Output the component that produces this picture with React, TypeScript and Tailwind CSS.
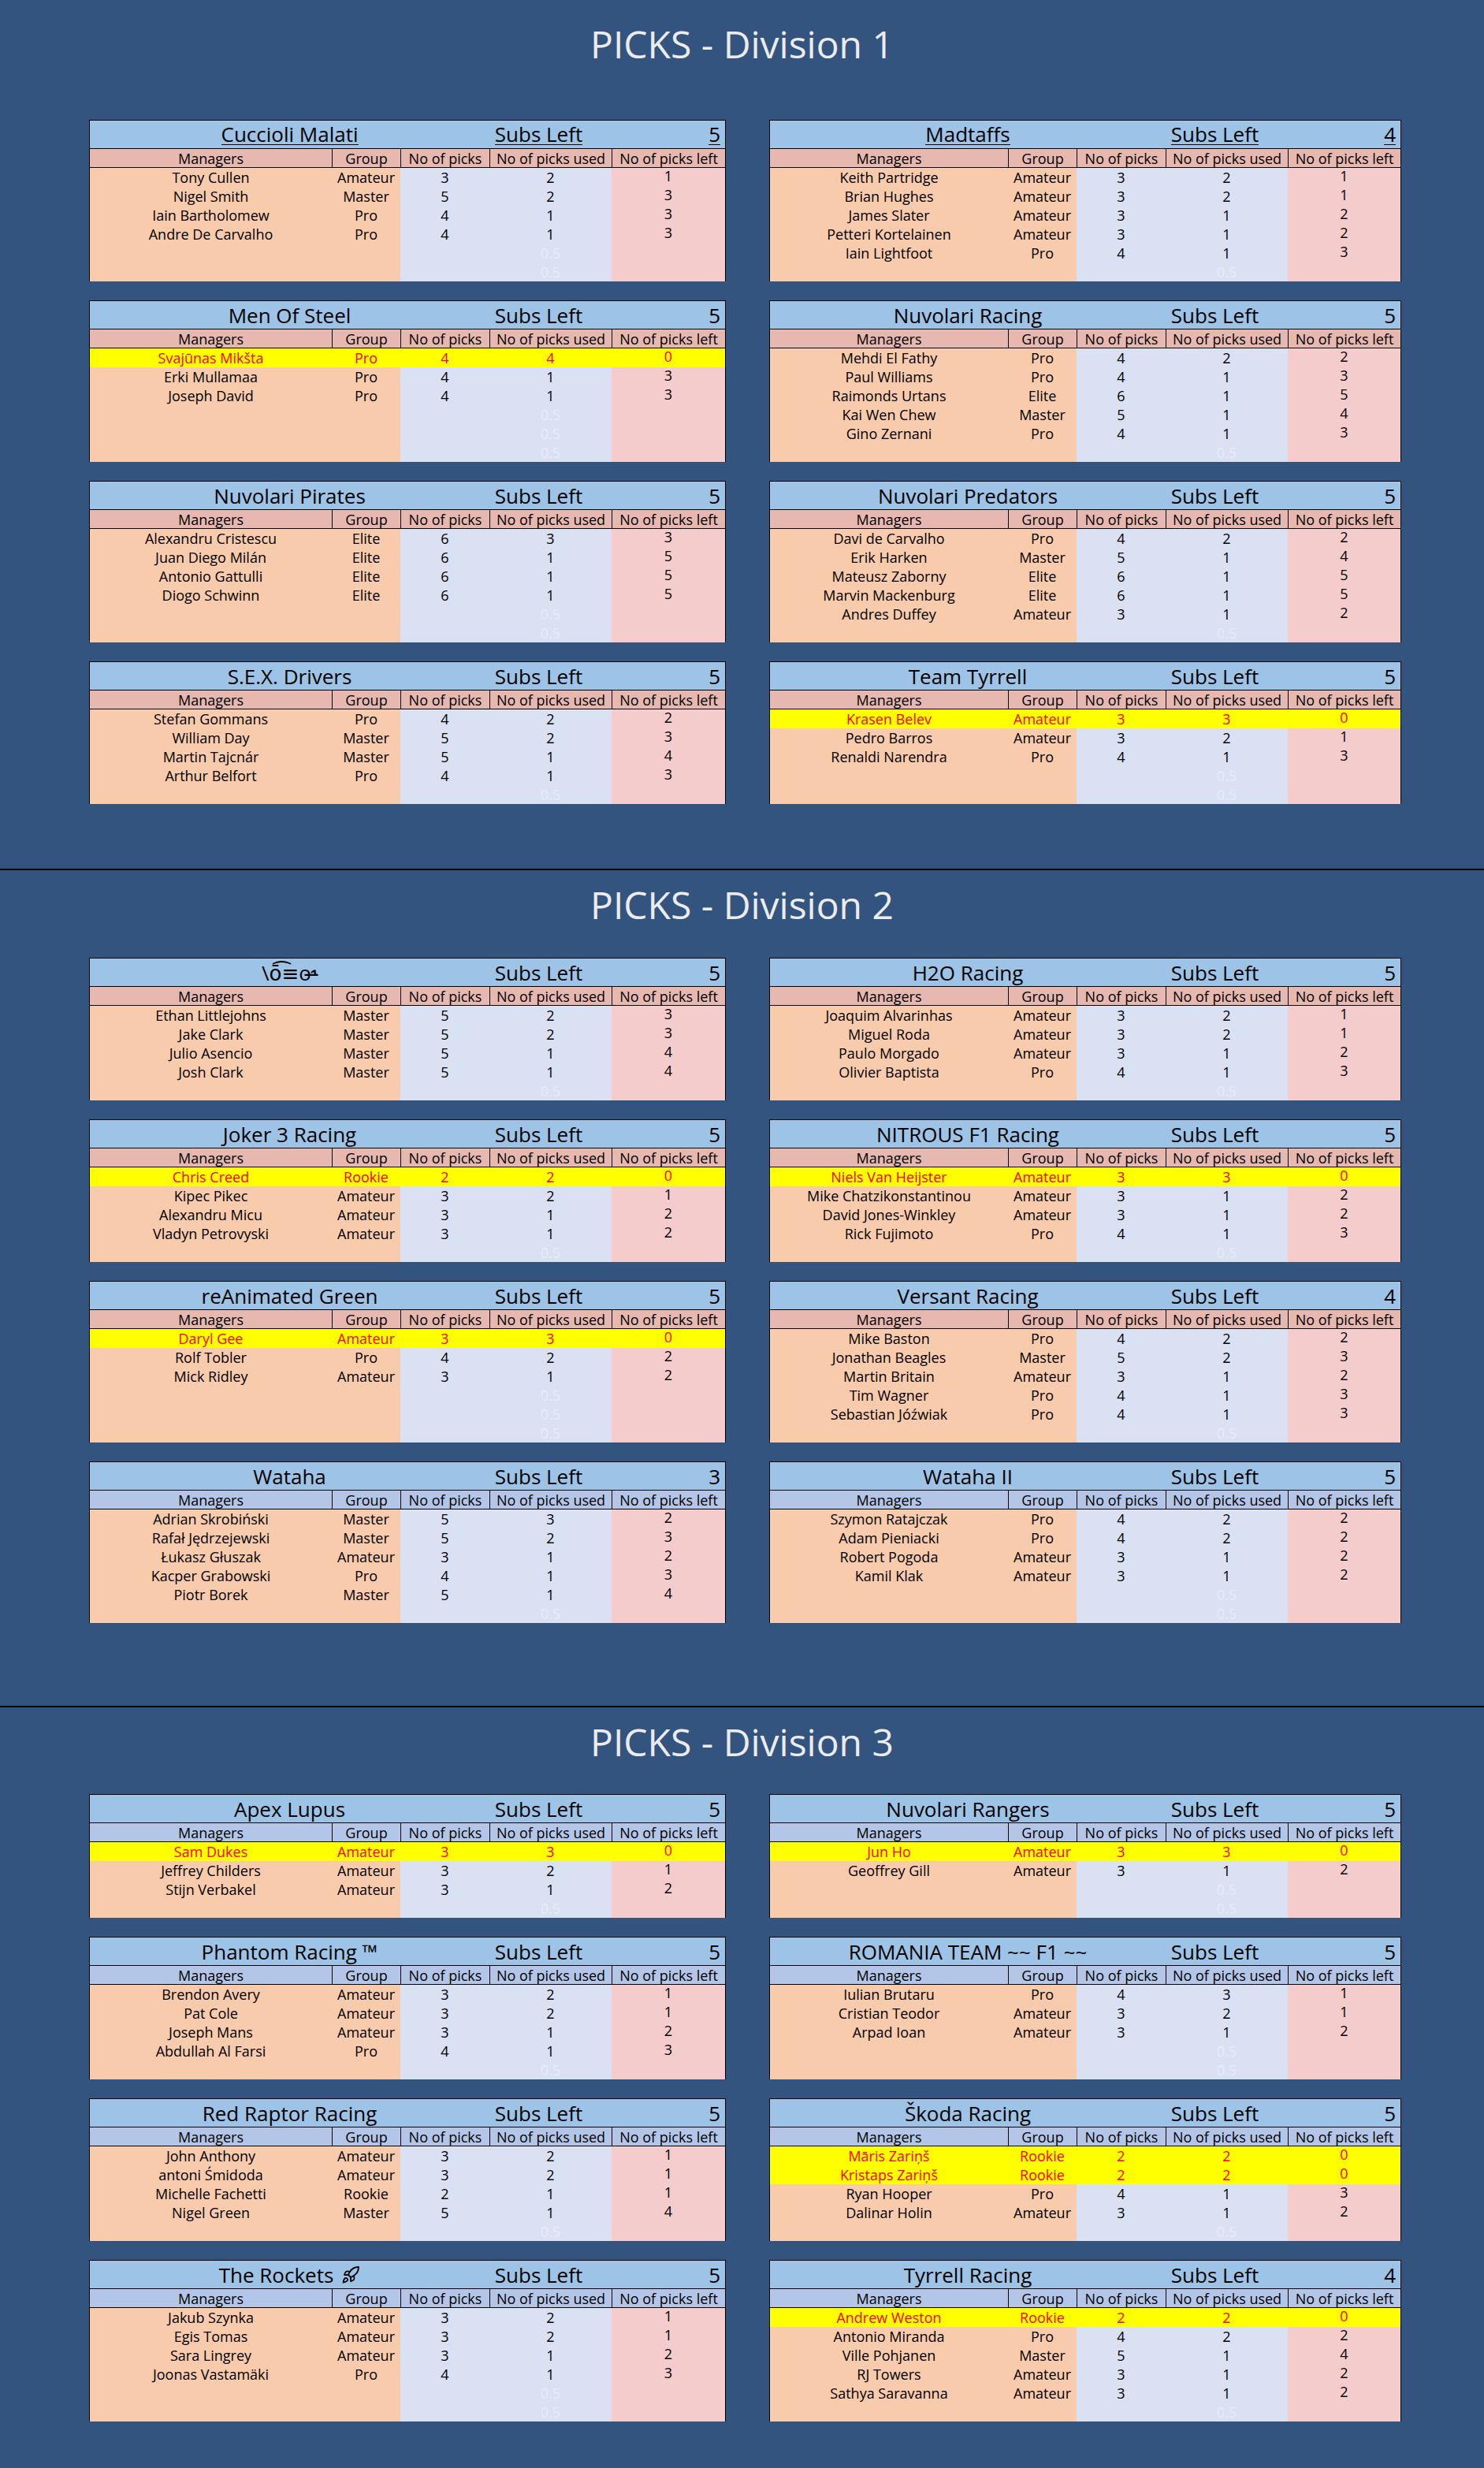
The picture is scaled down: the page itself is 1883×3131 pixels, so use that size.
import type { ReactNode } from "react";
import { Rocket } from "lucide-react";

type Row = [string, string, number, number, number, boolean?];
type Team = { name: ReactNode; subs: number; rows: Row[]; link?: boolean };

const LEFT_COLS = "grid-cols-[307px_87px_113px_155px_1fr]";
const RIGHT_COLS = "grid-cols-[302px_87px_113px_155px_1fr]";
const HEADERS = ["Managers", "Group", "No of picks", "No of picks used", "No of picks left"];

const div1: Team[] = [
  {
    name: "Cuccioli Malati",
    subs: 5,
    link: true,
    rows: [
      ["Tony Cullen", "Amateur", 3, 2, 1],
      ["Nigel Smith", "Master", 5, 2, 3],
      ["Iain Bartholomew", "Pro", 4, 1, 3],
      ["Andre De Carvalho", "Pro", 4, 1, 3],
    ],
  },
  {
    name: "Madtaffs",
    subs: 4,
    link: true,
    rows: [
      ["Keith Partridge", "Amateur", 3, 2, 1],
      ["Brian Hughes", "Amateur", 3, 2, 1],
      ["James Slater", "Amateur", 3, 1, 2],
      ["Petteri Kortelainen", "Amateur", 3, 1, 2],
      ["Iain Lightfoot", "Pro", 4, 1, 3],
    ],
  },
  {
    name: "Men Of Steel",
    subs: 5,
    rows: [
      ["Svajūnas Mikšta", "Pro", 4, 4, 0, true],
      ["Erki Mullamaa", "Pro", 4, 1, 3],
      ["Joseph David", "Pro", 4, 1, 3],
    ],
  },
  {
    name: "Nuvolari Racing",
    subs: 5,
    rows: [
      ["Mehdi El Fathy", "Pro", 4, 2, 2],
      ["Paul Williams", "Pro", 4, 1, 3],
      ["Raimonds Urtans", "Elite", 6, 1, 5],
      ["Kai Wen Chew", "Master", 5, 1, 4],
      ["Gino Zernani", "Pro", 4, 1, 3],
    ],
  },
  {
    name: "Nuvolari Pirates",
    subs: 5,
    rows: [
      ["Alexandru Cristescu", "Elite", 6, 3, 3],
      ["Juan Diego Milán", "Elite", 6, 1, 5],
      ["Antonio Gattulli", "Elite", 6, 1, 5],
      ["Diogo Schwinn", "Elite", 6, 1, 5],
    ],
  },
  {
    name: "Nuvolari Predators",
    subs: 5,
    rows: [
      ["Davi de Carvalho", "Pro", 4, 2, 2],
      ["Erik Harken", "Master", 5, 1, 4],
      ["Mateusz Zaborny", "Elite", 6, 1, 5],
      ["Marvin Mackenburg", "Elite", 6, 1, 5],
      ["Andres Duffey", "Amateur", 3, 1, 2],
    ],
  },
  {
    name: "S.E.X. Drivers",
    subs: 5,
    rows: [
      ["Stefan Gommans", "Pro", 4, 2, 2],
      ["William Day", "Master", 5, 2, 3],
      ["Martin Tajcnár", "Master", 5, 1, 4],
      ["Arthur Belfort", "Pro", 4, 1, 3],
    ],
  },
  {
    name: "Team Tyrrell",
    subs: 5,
    rows: [
      ["Krasen Belev", "Amateur", 3, 3, 0, true],
      ["Pedro Barros", "Amateur", 3, 2, 1],
      ["Renaldi Narendra", "Pro", 4, 1, 3],
    ],
  },
];

const div2: Team[] = [
  {
    name: "\\ō͡≡o˞̶",
    subs: 5,
    rows: [
      ["Ethan Littlejohns", "Master", 5, 2, 3],
      ["Jake Clark", "Master", 5, 2, 3],
      ["Julio Asencio", "Master", 5, 1, 4],
      ["Josh Clark", "Master", 5, 1, 4],
    ],
  },
  {
    name: "H2O Racing",
    subs: 5,
    rows: [
      ["Joaquim Alvarinhas", "Amateur", 3, 2, 1],
      ["Miguel Roda", "Amateur", 3, 2, 1],
      ["Paulo Morgado", "Amateur", 3, 1, 2],
      ["Olivier Baptista", "Pro", 4, 1, 3],
    ],
  },
  {
    name: "Joker 3 Racing",
    subs: 5,
    rows: [
      ["Chris Creed", "Rookie", 2, 2, 0, true],
      ["Kipec Pikec", "Amateur", 3, 2, 1],
      ["Alexandru Micu", "Amateur", 3, 1, 2],
      ["Vladyn Petrovyski", "Amateur", 3, 1, 2],
    ],
  },
  {
    name: "NITROUS F1 Racing",
    subs: 5,
    rows: [
      ["Niels Van Heijster", "Amateur", 3, 3, 0, true],
      ["Mike Chatzikonstantinou", "Amateur", 3, 1, 2],
      ["David Jones-Winkley", "Amateur", 3, 1, 2],
      ["Rick Fujimoto", "Pro", 4, 1, 3],
    ],
  },
  {
    name: "reAnimated Green",
    subs: 5,
    rows: [
      ["Daryl Gee", "Amateur", 3, 3, 0, true],
      ["Rolf Tobler", "Pro", 4, 2, 2],
      ["Mick Ridley", "Amateur", 3, 1, 2],
    ],
  },
  {
    name: "Versant Racing",
    subs: 4,
    rows: [
      ["Mike Baston", "Pro", 4, 2, 2],
      ["Jonathan Beagles", "Master", 5, 2, 3],
      ["Martin Britain", "Amateur", 3, 1, 2],
      ["Tim Wagner", "Pro", 4, 1, 3],
      ["Sebastian Jóźwiak", "Pro", 4, 1, 3],
    ],
  },
  {
    name: "Wataha",
    subs: 3,
    rows: [
      ["Adrian Skrobiński", "Master", 5, 3, 2],
      ["Rafał Jędrzejewski", "Master", 5, 2, 3],
      ["Łukasz Głuszak", "Amateur", 3, 1, 2],
      ["Kacper Grabowski", "Pro", 4, 1, 3],
      ["Piotr Borek", "Master", 5, 1, 4],
    ],
  },
  {
    name: "Wataha II",
    subs: 5,
    rows: [
      ["Szymon Ratajczak", "Pro", 4, 2, 2],
      ["Adam Pieniacki", "Pro", 4, 2, 2],
      ["Robert Pogoda", "Amateur", 3, 1, 2],
      ["Kamil Klak", "Amateur", 3, 1, 2],
    ],
  },
];

const div3: Team[] = [
  {
    name: "Apex Lupus",
    subs: 5,
    rows: [
      ["Sam Dukes", "Amateur", 3, 3, 0, true],
      ["Jeffrey Childers", "Amateur", 3, 2, 1],
      ["Stijn Verbakel", "Amateur", 3, 1, 2],
    ],
  },
  {
    name: "Nuvolari Rangers",
    subs: 5,
    rows: [
      ["Jun Ho", "Amateur", 3, 3, 0, true],
      ["Geoffrey Gill", "Amateur", 3, 1, 2],
    ],
  },
  {
    name: "Phantom Racing ™",
    subs: 5,
    rows: [
      ["Brendon Avery", "Amateur", 3, 2, 1],
      ["Pat Cole", "Amateur", 3, 2, 1],
      ["Joseph Mans", "Amateur", 3, 1, 2],
      ["Abdullah Al Farsi", "Pro", 4, 1, 3],
    ],
  },
  {
    name: "ROMANIA TEAM ~~ F1 ~~",
    subs: 5,
    rows: [
      ["Iulian Brutaru", "Pro", 4, 3, 1],
      ["Cristian Teodor", "Amateur", 3, 2, 1],
      ["Arpad Ioan", "Amateur", 3, 1, 2],
    ],
  },
  {
    name: "Red Raptor Racing",
    subs: 5,
    rows: [
      ["John Anthony", "Amateur", 3, 2, 1],
      ["antoni Śmidoda", "Amateur", 3, 2, 1],
      ["Michelle Fachetti", "Rookie", 2, 1, 1],
      ["Nigel Green", "Master", 5, 1, 4],
    ],
  },
  {
    name: "Škoda Racing",
    subs: 5,
    rows: [
      ["Māris Zariņš", "Rookie", 2, 2, 0, true],
      ["Kristaps Zariņš", "Rookie", 2, 2, 0, true],
      ["Ryan Hooper", "Pro", 4, 1, 3],
      ["Dalinar Holin", "Amateur", 3, 1, 2],
    ],
  },
  {
    name: (
      <span className="inline-flex items-center gap-[10px]">
        The Rockets <Rocket size={24} strokeWidth={1.8} />
      </span>
    ),
    subs: 5,
    rows: [
      ["Jakub Szynka", "Amateur", 3, 2, 1],
      ["Egis Tomas", "Amateur", 3, 2, 1],
      ["Sara Lingrey", "Amateur", 3, 1, 2],
      ["Joonas Vastamäki", "Pro", 4, 1, 3],
    ],
  },
  {
    name: "Tyrrell Racing",
    subs: 4,
    rows: [
      ["Andrew Weston", "Rookie", 2, 2, 0, true],
      ["Antonio Miranda", "Pro", 4, 2, 2],
      ["Ville Pohjanen", "Master", 5, 1, 4],
      ["RJ Towers", "Amateur", 3, 1, 2],
      ["Sathya Saravanna", "Amateur", 3, 1, 2],
    ],
  },
];

const Card = ({ team, slots, cols, blueHead }: { team: Team; slots: number; cols: string; blueHead: boolean }) => {
  const rows: (Row | null)[] = [...team.rows];
  while (rows.length < slots) rows.push(null);
  const u = team.link ? "border-b-[1.5px] border-black leading-[26px]" : "";

  return (
    <div className="border-x border-t border-black">
      <div className={`grid ${cols} h-[36px] border-b border-black bg-[#9dc3e6] text-[26px] leading-none`}>
        <div className="col-span-3 flex items-center justify-center whitespace-nowrap">
          <span className={u}>{team.name}</span>
        </div>
        <div className="flex items-center justify-center pr-[30px]">
          <span className={u}>Subs Left</span>
        </div>
        <div className="flex items-center justify-end pr-[6px]">
          <span className={u}>{team.subs}</span>
        </div>
      </div>

      <div className={`grid ${cols} h-[24px] border-b border-black ${blueHead ? "bg-[#b4c6e7]" : "bg-[#e6b8b0]"} text-[18px] leading-none`}>
        {HEADERS.map((h, i) => (
          <div key={h} className={`flex items-center justify-center whitespace-nowrap ${i ? "border-l border-black" : ""}`}>
            {h}
          </div>
        ))}
      </div>

      {rows.map((r, i) => {
        const hl = r?.[5];
        return (
          <div key={i} className={`grid ${cols} h-[24px] text-[18px] leading-none ${hl ? "bg-[#ffff00] text-[#ff0000]" : ""}`}>
            <div className={`flex items-center justify-center whitespace-nowrap ${hl ? "" : "bg-[#f8cbad]"}`}>{r?.[0]}</div>
            <div className={`flex items-center justify-center ${hl ? "" : "bg-[#f8cbad]"}`}>{r?.[1]}</div>
            <div className={`flex items-center justify-center ${hl ? "" : "bg-[#dae1f3]"}`}>{r?.[2]}</div>
            <div className={`flex items-center justify-center ${hl ? "" : "bg-[#dae1f3]"}`}>
              {r ? r[3] : <span className="text-[#e8ecf7]">0.5</span>}
            </div>
            <div className={`flex items-center justify-center pb-[5px] ${hl ? "" : "bg-[#f4cccc]"}`}>{r?.[4]}</div>
          </div>
        );
      })}
    </div>
  );
};

const Division = ({ teams, slots, blueHead, className }: { teams: Team[]; slots: number[]; blueHead: (i: number) => boolean; className: string }) => (
  <div className={`grid grid-cols-[808px_802px] gap-x-[55px] gap-y-[24px] items-start pl-[113px] ${className}`}>
    {teams.map((t, i) => (
      <Card
        key={i}
        team={t}
        slots={slots[Math.floor(i / 2)]}
        cols={i % 2 === 0 ? LEFT_COLS : RIGHT_COLS}
        blueHead={blueHead(i)}
      />
    ))}
  </div>
);

const Title = ({ children, h }: { children: ReactNode; h: string }) => (
  <div className={`${h} flex items-center justify-center text-[48px] text-[#ececec] leading-none`}>{children}</div>
);

const App = () => {
  return (
    <div className="min-h-screen bg-[#345480] text-black font-['Open_Sans','DejaVu_Sans',sans-serif]">
      <Title h="h-[112px]">PICKS - Division 1</Title>
      <Division className="mt-[40px]" teams={div1} slots={[6, 6, 6, 5]} blueHead={() => false} />

      <div className="mt-[82px] h-[2px] bg-black" />
      <Title h="h-[88px]">PICKS - Division 2</Title>
      <Division className="mt-[23px]" teams={div2} slots={[5, 5, 6, 6]} blueHead={(i) => i >= 6} />

      <div className="mt-[105px] h-[2px] bg-black" />
      <Title h="h-[88px]">PICKS - Division 3</Title>
      <Division className="mt-[22px]" teams={div3} slots={[4, 5, 5, 6]} blueHead={() => true} />

      <div className="h-[56px]" />
    </div>
  );
};

export default App;
